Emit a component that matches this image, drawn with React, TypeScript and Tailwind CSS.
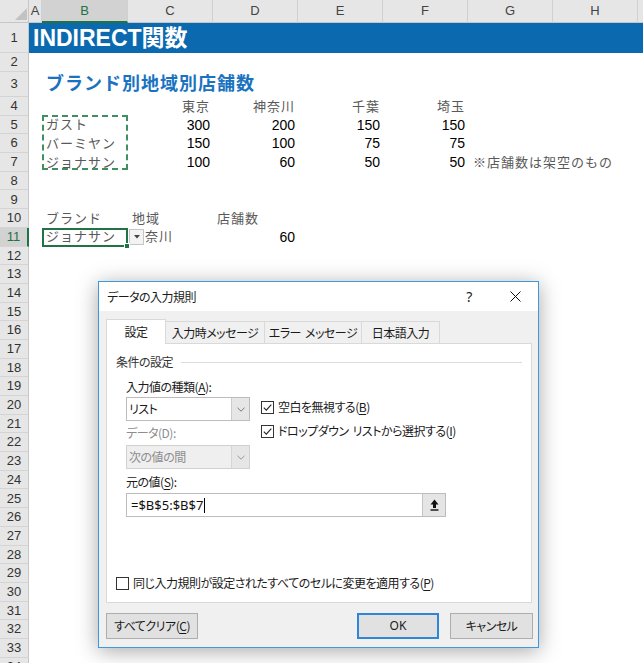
import React from 'react';

type CD = { t: React.ReactNode; r?: boolean; cls?: string; pad?: string; extra?: React.ReactNode } | null;

const colW = ['w-[13px]', 'w-[86px]', 'w-[85px]', 'w-[85px]', 'w-[85px]', 'w-[85px]', 'w-[85px]', 'w-[85px]', 'w-[20px]'];
const letters = ['A', 'B', 'C', 'D', 'E', 'F', 'G', 'H', ''];

const JP = 'text-[13px] tracking-[1px] text-[#595959]';
const NUM = 'text-[14px] text-black';

function RowHead({ n, sel }: { n: number; sel?: boolean }) {
  return (
    <div
      className={`w-[29px] shrink-0 flex items-center justify-center text-[13px] border-b border-b-[#d4d4d4] ${
        sel
          ? 'bg-[#d2d2d2] text-[#217346] border-r-2 border-r-[#217346]'
          : 'bg-[#e6e6e6] text-[#333] border-r border-r-[#c6c6c6]'
      }`}
    >
      {n}
    </div>
  );
}

function Row({ n, h, cells = [], sel }: { n: number; h: string; cells?: CD[]; sel?: boolean }) {
  return (
    <div className={`flex ${h}`}>
      <RowHead n={n} sel={sel} />
      {colW.map((w, i) => {
        const c = cells[i] ?? null;
        const pad = c?.pad ?? (c?.r ? 'justify-end pr-[3px]' : 'pl-[4px]');
        return (
          <div key={i} className={`${w} shrink-0 flex items-center whitespace-nowrap relative ${pad} ${c?.cls ?? ''}`}>
            {c?.t}
            {c?.extra}
          </div>
        );
      })}
    </div>
  );
}

const jp = (t: string): CD => ({ t, cls: JP });
const jpr = (t: string): CD => ({ t, cls: JP, r: true });
const num = (t: string): CD => ({ t, cls: NUM, r: true });

function U({ children }: { children: React.ReactNode }) {
  return <span className="underline underline-offset-[2px] decoration-[1px]">{children}</span>;
}

function Check({ checked }: { checked?: boolean }) {
  return (
    <span className="w-[13px] h-[13px] border border-[#333] bg-white flex items-center justify-center shrink-0">
      {checked && (
        <svg width="11" height="11" viewBox="0 0 11 11">
          <path d="M1.8 5.6 L4.3 8.1 L9.3 2.6" fill="none" stroke="#222" strokeWidth="1.1" />
        </svg>
      )}
    </span>
  );
}

function Chevron({ color }: { color: string }) {
  return (
    <svg width="8" height="5" viewBox="0 0 8 5">
      <path d="M0.5 0.8 L4 4.2 L7.5 0.8" fill="none" stroke={color} strokeWidth="1" />
    </svg>
  );
}

function Dialog() {
  return (
    <div className="absolute left-[98px] top-[281px] w-[441px] h-[367px] border border-[#3c99e0] bg-[#f0f0f0] shadow-[0_3px_20px_rgba(0,0,0,0.35)] flex flex-col font-['Noto_Sans_CJK_JP',sans-serif] [font-feature-settings:'palt'] text-[12px] tracking-[-0.5px] leading-[16px] text-[#1a1a1a]">
      <div className="h-[29px] bg-white flex items-center shrink-0">
        <span className="pl-[8px]">データの入力規則</span>
        <div className="ml-auto flex h-full">
          <div className="w-[46px] flex items-center justify-center text-[14px] font-['Noto_Sans',sans-serif]">?</div>
          <div className="w-[46px] flex items-center justify-center">
            <svg width="11" height="11" viewBox="0 0 11 11">
              <path d="M0.5 0.5 L10.5 10.5 M10.5 0.5 L0.5 10.5" stroke="#111" strokeWidth="1" />
            </svg>
          </div>
        </div>
      </div>
      <div className="flex-1 flex flex-col px-[7px] pt-[8px]">
        <div className="flex items-end h-[25px] -mb-px relative z-10">
          <div className="w-[60px] h-[25px] bg-white border border-b-0 border-[#d9d9d9] flex items-center justify-center">設定</div>
          <div className="w-[99px] h-[23px] bg-[#f0f0f0] border-t border-r border-b border-[#d9d9d9] flex items-center justify-center">入力時メッセージ</div>
          <div className="w-[97px] h-[23px] bg-[#f0f0f0] border-t border-r border-b border-[#d9d9d9] flex items-center justify-center">
            エラー<span className="ml-[4px]">メッセージ</span>
          </div>
          <div className="w-[78px] h-[23px] bg-[#f0f0f0] border-t border-r border-b border-[#d9d9d9] flex items-center justify-center">日本語入力</div>
        </div>
        <div className="w-[426px] h-[260px] bg-white border border-[#d9d9d9] flex flex-col pl-[9px] pr-[9px] pt-[10px] pb-[11px]">
          <div className="flex items-center h-[16px]">
            <span className="text-[#333]">条件の設定</span>
            <div className="flex-1 h-px bg-[#dcdcdc] ml-[8px]" />
          </div>
          <div className="pl-[10px] flex flex-col">
            <div className="mt-[9px] h-[16px]">
              入力値の種類(<U>A</U>):
            </div>
            <div className="flex">
              <div className="w-[124px] flex flex-col">
                <div className="mt-[2px] h-[24px] bg-white border border-[#bcbcbc] flex items-stretch">
                  <span className="flex-1 flex items-center pl-[2px]">リスト</span>
                  <span className="w-[18px] bg-[#e6e6e6] border-l border-[#cccccc] flex items-center justify-center">
                    <Chevron color="#777" />
                  </span>
                </div>
                <div className="mt-[4px] h-[16px] text-[#8d8d8d]">データ(D):</div>
                <div className="mt-[4px] h-[24px] bg-[#efefef] border border-[#d0d0d0] flex items-stretch text-[#8d8d8d]">
                  <span className="flex-1 flex items-center pl-[2px]">次の値の間</span>
                  <span className="w-[18px] bg-[#e6e6e6] border-l border-[#d6d6d6] flex items-center justify-center">
                    <Chevron color="#999" />
                  </span>
                </div>
              </div>
              <div className="ml-[11px] flex flex-col">
                <div className="mt-[4px] h-[16px] flex items-center gap-[4px]">
                  <Check checked />
                  <span>
                    空白を無視する(<U>B</U>)
                  </span>
                </div>
                <div className="mt-[8px] h-[16px] flex items-center gap-[4px]">
                  <Check checked />
                  <span>
                    ドロップダウン<span className="ml-[4px]">リストから選択する(<U>I</U>)</span>
                  </span>
                </div>
              </div>
            </div>
            <div className="mt-[5px] h-[16px]">
              元の値(<U>S</U>):
            </div>
            <div className="mt-[3px] h-[24px] w-[320px] bg-white border border-[#bcbcbc] flex items-stretch">
              <span className="flex-1 flex items-center pl-[4px] text-[13px] tracking-normal font-['Noto_Sans',sans-serif] text-[#111]">
                =$B$5:$B$7<span className="w-px h-[15px] bg-black ml-[1px]" />
              </span>
              <span className="w-[23px] bg-[#e5e5e5] border-l border-[#c4c4c4] flex items-center justify-center">
                <svg width="9" height="12" viewBox="0 0 9 12">
                  <polygon points="4.5,0.5 8.5,5.5 6,5.5 6,9 3,9 3,5.5 0.5,5.5" fill="#111" />
                  <rect x="0.5" y="10.3" width="8" height="1.4" fill="#111" />
                </svg>
              </span>
            </div>
          </div>
          <div className="mt-auto h-[16px] flex items-center gap-[4px]">
            <Check />
            <span>
              同じ入力規則が設定されたすべてのセルに変更を適用する(<U>P</U>)
            </span>
          </div>
        </div>
        <div className="mt-[10px] h-[26px] flex">
          <div className="w-[92px] h-[26px] bg-[#e1e1e1] border border-[#adadad] flex items-center justify-center">
            すべてクリア(<U>C</U>)
          </div>
          <div className="ml-auto w-[82px] h-[26px] bg-[#e1e1e1] border-2 border-[#2f86d6] flex items-center justify-center font-['Noto_Sans',sans-serif] tracking-normal text-[12px]">
            OK
          </div>
          <div className="ml-[11px] mr-[-2px] w-[83px] h-[26px] bg-[#e1e1e1] border border-[#adadad] flex items-center justify-center">
            キャンセル
          </div>
        </div>
      </div>
    </div>
  );
}

export default function App() {
  const rest = Array.from({ length: 23 }, (_, i) => i + 12);
  return (
    <div className="relative w-[643px] h-[663px] overflow-hidden bg-white font-['Liberation_Sans','Noto_Sans_CJK_JP',sans-serif]">
      {/* column header */}
      <div className="flex h-[23px] bg-[#e6e6e6]">
        <div className="w-[29px] shrink-0 relative border-r border-b border-[#c6c6c6]">
          <svg width="29" height="23" viewBox="0 0 29 23" className="absolute left-0 top-0">
            <polygon points="27,8 27,20 15,20" fill="#c2c2c2" />
          </svg>
        </div>
        {letters.map((l, i) => (
          <div
            key={i}
            className={`${colW[i]} shrink-0 flex items-center justify-center border-r border-r-[#d0d0d0] text-[13px] ${
              i === 1
                ? 'bg-[#d2d2d2] text-[#217346] border-b-2 border-b-[#217346]'
                : 'text-[#444] border-b border-b-[#c6c6c6]'
            }`}
          >
            {l}
          </div>
        ))}
      </div>
      {/* row 1 */}
      <div className="flex h-[30px]">
        <RowHead n={1} />
        <div className="flex-1 bg-[#0b69b0] flex items-center pl-[4px] text-white font-bold text-[23px] whitespace-nowrap">
          INDIRECT関数
        </div>
      </div>
      <Row n={2} h="h-[19px]" />
      <Row
        n={3}
        h="h-[25px]"
        cells={[null, { t: 'ブランド別地域別店舗数', cls: 'text-[18px] font-bold tracking-[1px] text-[#1a73c0]' }]}
      />
      <Row n={4} h="h-[18.7px]" cells={[null, null, jpr('東京'), jpr('神奈川'), jpr('千葉'), jpr('埼玉')]} />
      <Row n={5} h="h-[18.7px]" cells={[null, jp('ガスト'), num('300'), num('200'), num('150'), num('150')]} />
      <Row n={6} h="h-[18.7px]" cells={[null, jp('バーミヤン'), num('150'), num('100'), num('75'), num('75')]} />
      <Row
        n={7}
        h="h-[18.7px]"
        cells={[null, jp('ジョナサン'), num('100'), num('60'), num('50'), num('50'), { t: '※店舗数は架空のもの', cls: JP, pad: 'pl-[5px]' }]}
      />
      <Row n={8} h="h-[18.7px]" />
      <Row n={9} h="h-[18.7px]" />
      <Row n={10} h="h-[18.7px]" cells={[null, jp('ブランド'), jp('地域'), jp('店舗数')]} />
      <Row
        n={11}
        h="h-[18.7px]"
        sel
        cells={[
          null,
          {
            t: 'ジョナサン',
            cls: `${JP} border-2 border-[#217346]`,
            pad: 'pl-[2px]',
            extra: <span className="absolute right-[-4px] bottom-[-4px] w-[6px] h-[6px] bg-[#217346] border border-white z-10" />,
          },
          {
            t: '神奈川',
            cls: JP,
            pad: 'pl-[3px]',
            extra: (
              <span className="absolute left-[1px] top-[1px] w-[15px] h-[16px] bg-[#f3f3f3] border border-[#c6c6c6] flex items-center justify-center">
                <svg width="6" height="4" viewBox="0 0 6 4">
                  <polygon points="0,0 6,0 3,3.5" fill="#444" />
                </svg>
              </span>
            ),
          },
          num('60'),
        ]}
      />
      {rest.map((n) => (
        <Row key={n} n={n} h="h-[18.7px]" />
      ))}
      {/* copy marquee */}
      <div className="absolute left-[42px] top-[115px] w-[86px] h-[55px] border-2 border-dashed border-[#3f8f60]" />
      <Dialog />
    </div>
  );
}
